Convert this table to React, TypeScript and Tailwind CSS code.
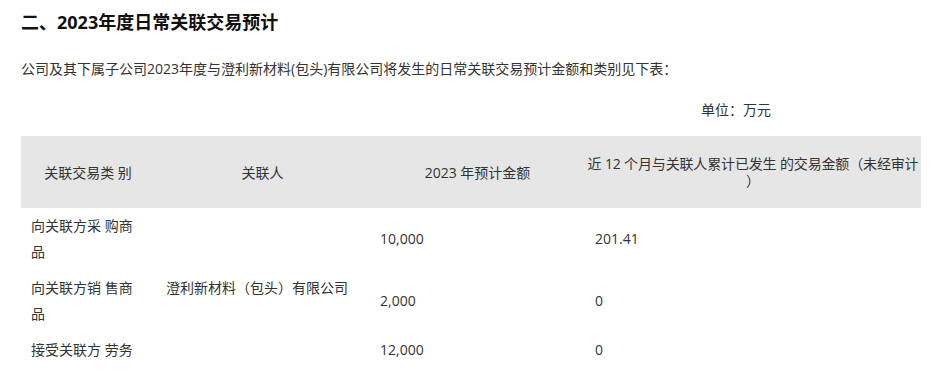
const font = "font-['Open_Sans','Noto_Sans_CJK_SC',sans-serif]"

const rows = [
  { category: "向关联方采 购商品", amount: "10,000", occurred: "201.41" },
  { category: "向关联方销 售商品", amount: "2,000", occurred: "0" },
  { category: "接受关联方 劳务", amount: "12,000", occurred: "0" },
]

export default function App() {
  return (
    <div className={`${font} min-h-[385px] bg-white px-[21px] pt-[10px] text-[#333]`}>
      <h2 className="text-[18px] font-bold leading-[24px] text-[#111]">
        二、2023年度日常关联交易预计
      </h2>
      <p className="mt-[22px] text-[14px] leading-[26px]">
        公司及其下属子公司2023年度与澄利新材料(包头)有限公司将发生的日常关联交易预计金额和类别见下表：
      </p>
      <p className="mt-[15px] pr-[152px] text-right text-[14px] leading-[26px]">
        单位：万元
      </p>

      <table className="mt-[13px] w-[900px] table-fixed border-collapse text-[14px]">
        <colgroup>
          <col className="w-[134px]" />
          <col className="w-[215px]" />
          <col className="w-[215px]" />
          <col className="w-[336px]" />
        </colgroup>
        <thead>
          <tr className="bg-[#e6e6e6] leading-[17px]">
            <th className="h-[72px] px-[10px] py-[19px] text-center font-normal">
              关联交易类 别
            </th>
            <th className="px-[10px] py-[19px] text-center font-normal">关联人</th>
            <th className="px-[10px] py-[19px] text-center font-normal">
              2023 年预计金额
            </th>
            <th className="whitespace-nowrap px-0 py-[19px] text-center font-normal tracking-[-0.15px]">
              近 12 个月与关联人累计已发生 的交易金额（未经审计
              <br />）
            </th>
          </tr>
        </thead>
        <tbody className="leading-[26px]">
          {rows.map((row, i) => (
            <tr key={row.category}>
              <td className="px-[10px] py-[5px] align-middle">{row.category}</td>
              {i === 0 && (
                <td rowSpan={3} className="px-[11px] py-[5px] align-middle">
                  澄利新材料（包头）有限公司
                </td>
              )}
              <td className="px-[10px] py-[5px] align-middle">{row.amount}</td>
              <td className="px-[10px] py-[5px] align-middle">{row.occurred}</td>
            </tr>
          ))}
        </tbody>
      </table>
    </div>
  )
}
